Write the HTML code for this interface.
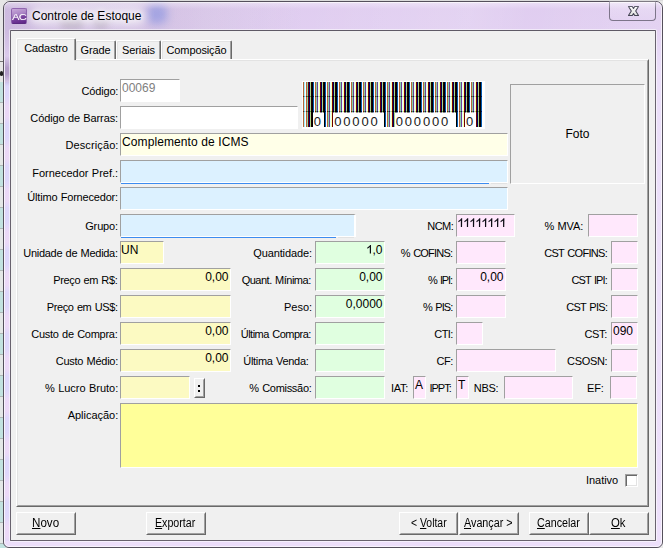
<!DOCTYPE html><html><head><meta charset="utf-8"><title>Controle de Estoque</title><style>
*{margin:0;padding:0;box-sizing:border-box;}
html,body{width:663px;height:548px;overflow:hidden;background:#e9e9e9;}
body{position:relative;font-family:"Liberation Sans",sans-serif;font-size:11px;color:#000;}
.a{position:absolute;}
#win{position:absolute;left:3px;top:1px;width:660px;height:547px;border:1px solid #55505c;border-radius:7px 7px 6px 6px;
 background:linear-gradient(100deg,rgba(255,255,255,0) 0%,rgba(255,255,255,.10) 28%,rgba(255,255,255,0) 40%,rgba(255,255,255,.12) 62%,rgba(255,255,255,0) 70%,rgba(255,255,255,.10) 90%),linear-gradient(180deg,#e0cdf0 0px,#e1cff1 30px,#e9dbf8 70px,#ebdcfa 100%);}
#win:before{content:"";position:absolute;left:0;top:0;right:0;bottom:0;border:1px solid rgba(255,255,255,.65);border-radius:6px 6px 5px 5px;}
#client{position:absolute;left:10px;top:30px;width:646px;height:511px;background:#f0f0f0;border:1px solid #68626e;border-top-color:#5f5a66;border-radius:1px;box-shadow:0 0 0 1px rgba(255,255,255,.55);}
.lbl{position:absolute;white-space:nowrap;font-size:11px;line-height:14px;}
.f{position:absolute;height:23px;border:1px solid #a0a0a0;border-right-color:#fff;border-bottom-color:#fff;font-size:12px;line-height:14px;padding:1px 0 0 1px;white-space:nowrap;overflow:hidden;}
.r{text-align:right;padding-right:1.5px;}
.y0{background:#ffffe8;} .w{background:#fff;} .b{background:#dcf1ff;} .y{background:#fcfac2;} .g{background:#e0ffe0;} .p{background:#ffe8fc;} .yy{background:#ffff99;}
.btn{position:absolute;top:512px;height:23px;letter-spacing:-0.2px;background:#f0f0f0;border:1px solid #fff;border-right-color:#696969;border-bottom-color:#696969;font-size:11px;text-align:center;line-height:18px;}
.btn:before{content:"";position:absolute;left:0;top:0;right:0;bottom:0;border:1px solid #f0f0f0;border-right-color:#a0a0a0;border-bottom-color:#a0a0a0;}
.btn u{text-decoration:underline;}
</style></head><body>
<div class="a" style="left:0;top:0;width:663px;height:1px;background:#dcdcdc"></div>
<div class="a" style="left:0;top:0px;width:6px;height:548px;background:#e6e6e6"></div>
<div class="a" style="left:0;top:82px;width:6px;height:466px;background:repeating-linear-gradient(180deg,#c2e2e0 0px,#c2e2e0 20px,#b0b8b8 20px,#b0b8b8 21px,#e4e7e7 21px,#e4e7e7 41px,#b0b8b8 41px,#b0b8b8 42px)"></div>
<div class="a" style="left:0;top:61px;width:4px;height:1px;background:#777"></div>
<div class="a" style="left:0;top:71px;width:3px;height:5px;background:#222;border-radius:2px"></div>
<div id="win"></div>
<div class="a" style="left:4px;top:2px;width:300px;height:28px;border-radius:6px 0 0 0;background:linear-gradient(90deg,rgba(80,60,110,.13),rgba(80,60,110,.10) 50%,rgba(80,60,110,0))"></div>
<div class="a" style="left:4px;top:30px;width:6px;height:60px;background:linear-gradient(180deg,rgba(80,60,110,.13),rgba(80,60,110,.0))"></div>
<div class="a" style="left:60px;top:17px;width:24px;height:12px;border-radius:6px;background:rgba(120,110,120,.35);filter:blur(3px)"></div>
<div class="a" style="left:93px;top:17px;width:16px;height:12px;border-radius:6px;background:rgba(120,110,120,.30);filter:blur(3px)"></div>
<div class="a" style="left:147px;top:4px;width:20px;height:20px;border-radius:7px;background:rgba(100,125,225,.42);filter:blur(4px)"></div>
<div class="a" style="left:30px;top:6px;width:116px;height:20px;border-radius:10px;background:rgba(255,255,255,.55);filter:blur(5px)"></div>
<div class="a" style="left:11px;top:8px;width:16px;height:16px;border-radius:2px;background:linear-gradient(165deg,#c9a9da 0%,#a983c4 40%,#7a459f 58%,#5e2487 100%);border:1px solid #8d62ad;border-bottom-color:#5a2a80"></div>
<div class="a" style="left:11px;top:11px;width:16px;font-size:10px;line-height:12px;color:#fff;text-align:center;letter-spacing:-0.6px;transform:scale(1.12,.9);text-shadow:0 0 1px rgba(255,255,255,.5)">AC</div>
<div class="a" style="left:32px;top:9px;font-size:12px;line-height:14px;white-space:nowrap;text-shadow:0 0 5px rgba(255,255,255,.9),0 0 8px rgba(255,255,255,.7)">Controle de Estoque</div>
<div class="a" style="left:609px;top:1px;width:47px;height:20px;border:1px solid #7d758a;border-top:none;border-radius:0 0 4px 4px;background:linear-gradient(180deg,rgba(255,255,255,.25),rgba(255,255,255,.05))"></div>
<svg class="a" style="left:626px;top:4px" width="15" height="14" viewBox="0 0 15 14"><defs><linearGradient id="xg" x1="0" y1="0" x2="0" y2="1"><stop offset="0" stop-color="#fff"/><stop offset="1" stop-color="#dcdcdc"/></linearGradient></defs><path d="M2.5 2.5H6.3L7.5 4.5 8.7 2.5H12.5L9.7 7 12.5 11.5H8.7L7.5 9.5 6.3 11.5H2.5L5.3 7Z" fill="url(#xg)" stroke="#464656" stroke-width="1.1" stroke-linejoin="round"/></svg>
<div class="a" style="left:5px;top:82px;width:5px;height:459px;background:repeating-linear-gradient(180deg,rgba(195,205,255,.32) 0px,rgba(195,205,255,.32) 14px,rgba(240,205,240,.22) 24px,rgba(240,205,240,.22) 35px,rgba(195,205,255,.32) 42px)"></div>
<div class="a" style="left:5px;top:56px;width:5px;height:30px;background:linear-gradient(180deg,rgba(120,90,150,0),rgba(120,90,150,.45) 40%,rgba(120,90,150,.45) 60%,rgba(120,90,150,0))"></div>
<div class="a" style="left:5px;top:2px;width:656px;height:7px;border-radius:5px 5px 0 0;background:linear-gradient(180deg,rgba(255,255,255,.38),rgba(255,255,255,0))"></div>
<div id="client"></div>
<div class="a" style="left:16px;top:59px;width:633px;height:448px;border:1px solid #fff;border-right-color:#696969;border-bottom-color:#696969"></div>
<div class="a" style="left:17px;top:60px;width:631px;height:446px;border:1px solid #e3e3e3;border-right-color:#a0a0a0;border-bottom-color:#a0a0a0"></div>
<div class="a" style="left:75px;top:40px;width:41px;height:19px;background:#f0f0f0;border-left:1px solid #fff;border-top:1px solid #fff;border-right:1px solid #696969;border-radius:2px 2px 0 0;box-shadow:inset 1px 1px 0 #e3e3e3"></div>
<div class="a" style="left:114px;top:41px;width:1px;height:18px;background:#a0a0a0"></div>
<div class="a" style="left:75px;top:44px;width:41px;text-align:center;font-size:11px;line-height:13px;letter-spacing:-0.12px">Grade</div>
<div class="a" style="left:116px;top:40px;width:45px;height:19px;background:#f0f0f0;border-left:1px solid #fff;border-top:1px solid #fff;border-right:1px solid #696969;border-radius:2px 2px 0 0;box-shadow:inset 1px 1px 0 #e3e3e3"></div>
<div class="a" style="left:159px;top:41px;width:1px;height:18px;background:#a0a0a0"></div>
<div class="a" style="left:116px;top:44px;width:45px;text-align:center;font-size:11px;line-height:13px;letter-spacing:-0.12px">Seriais</div>
<div class="a" style="left:161px;top:40px;width:71px;height:19px;background:#f0f0f0;border-left:1px solid #fff;border-top:1px solid #fff;border-right:1px solid #696969;border-radius:2px 2px 0 0;box-shadow:inset 1px 1px 0 #e3e3e3"></div>
<div class="a" style="left:230px;top:41px;width:1px;height:18px;background:#a0a0a0"></div>
<div class="a" style="left:161px;top:44px;width:71px;text-align:center;font-size:11px;line-height:13px;letter-spacing:-0.12px">Composição</div>
<div class="a" style="left:16px;top:38px;width:60px;height:22px;background:#f0f0f0;border-left:1px solid #fff;border-top:1px solid #fff;border-right:1px solid #696969;border-radius:2px 2px 0 0;box-shadow:inset 1px 1px 0 #e3e3e3"></div>
<div class="a" style="left:74px;top:39px;width:1px;height:21px;background:#a0a0a0"></div>
<div class="a" style="left:16px;top:42px;width:60px;text-align:center;font-size:11px;line-height:13px;letter-spacing:-0.12px">Cadastro</div>
<div class="a" style="left:18px;top:59px;width:56px;height:2px;background:#f0f0f0"></div>
<div class="lbl" style="left:81.5px;top:84px;letter-spacing:-0.17px;word-spacing:0.47px">Código:</div>
<div class="lbl" style="left:30.3px;top:111px;letter-spacing:-0.1px;word-spacing:0.40px">Código de Barras:</div>
<div class="lbl" style="left:65.4px;top:138px;letter-spacing:0.12px;word-spacing:0.18px">Descrição:</div>
<div class="lbl" style="left:32.3px;top:166px;letter-spacing:-0.01px;word-spacing:0.31px">Fornecedor Pref.:</div>
<div class="lbl" style="left:27.3px;top:190px;letter-spacing:-0.19px;word-spacing:0.49px">Último Fornecedor:</div>
<div class="lbl" style="left:85.2px;top:219px;letter-spacing:-0.14px;word-spacing:0.44px">Grupo:</div>
<div class="lbl" style="left:23.3px;top:246px;letter-spacing:-0.29px;word-spacing:0.59px">Unidade de Medida:</div>
<div class="lbl" style="left:53.3px;top:273px;letter-spacing:-0.38px;word-spacing:0.68px">Preço em R$:</div>
<div class="lbl" style="left:46.7px;top:300px;letter-spacing:-0.38px;word-spacing:0.68px">Preço em US$:</div>
<div class="lbl" style="left:31.3px;top:327px;letter-spacing:-0.26px;word-spacing:0.56px">Custo de Compra:</div>
<div class="lbl" style="left:55.7px;top:354px;letter-spacing:-0.25px;word-spacing:0.55px">Custo Médio:</div>
<div class="lbl" style="left:45.0px;top:381px;letter-spacing:-0.01px;word-spacing:0.31px">% Lucro Bruto:</div>
<div class="lbl" style="left:67.7px;top:408px;letter-spacing:-0.02px;word-spacing:0.32px">Aplicação:</div>
<div class="lbl" style="left:253.3px;top:246px;letter-spacing:-0.13px;word-spacing:0.43px">Quantidade:</div>
<div class="lbl" style="left:241.7px;top:273px;letter-spacing:-0.5px;word-spacing:0.80px">Quant. Mínima:</div>
<div class="lbl" style="left:284.0px;top:300px;letter-spacing:0.0px;word-spacing:0.30px">Peso:</div>
<div class="lbl" style="left:240.7px;top:327px;letter-spacing:-0.5px;word-spacing:0.80px">Última Compra:</div>
<div class="lbl" style="left:243.3px;top:354px;letter-spacing:-0.3px;word-spacing:0.60px">Última Venda:</div>
<div class="lbl" style="left:249.3px;top:381px;letter-spacing:-0.29px;word-spacing:0.59px">% Comissão:</div>
<div class="lbl" style="left:427.3px;top:219px;letter-spacing:-0.57px;word-spacing:0.87px">NCM:</div>
<div class="lbl" style="left:400.8px;top:246px;letter-spacing:-0.79px;word-spacing:1.09px">% COFINS:</div>
<div class="lbl" style="left:427.9px;top:273px;letter-spacing:-1.15px;word-spacing:1.45px">% IPI:</div>
<div class="lbl" style="left:423.0px;top:300px;letter-spacing:-0.92px;word-spacing:1.22px">% PIS:</div>
<div class="lbl" style="left:434.3px;top:327px;letter-spacing:-0.57px;word-spacing:0.87px">CTI:</div>
<div class="lbl" style="left:436.4px;top:354px;letter-spacing:-0.4px;word-spacing:0.70px">CF:</div>
<div class="lbl" style="left:391.0px;top:381px;letter-spacing:-0.27px;word-spacing:0.57px">IAT:</div>
<div class="lbl" style="left:429.4px;top:381px;letter-spacing:-0.97px;word-spacing:1.27px">IPPT:</div>
<div class="lbl" style="left:473.7px;top:381px;letter-spacing:-0.23px;word-spacing:0.53px">NBS:</div>
<div class="lbl" style="left:544.6px;top:219px;letter-spacing:-0.15px;word-spacing:0.45px">% MVA:</div>
<div class="lbl" style="left:544.2px;top:246px;letter-spacing:-0.68px;word-spacing:0.98px">CST COFINS:</div>
<div class="lbl" style="left:571.5px;top:273px;letter-spacing:-0.9px;word-spacing:1.20px">CST IPI:</div>
<div class="lbl" style="left:566.2px;top:300px;letter-spacing:-0.68px;word-spacing:0.98px">CST PIS:</div>
<div class="lbl" style="left:584.4px;top:327px;letter-spacing:-0.33px;word-spacing:0.63px">CST:</div>
<div class="lbl" style="left:567.1px;top:354px;letter-spacing:-0.34px;word-spacing:0.64px">CSOSN:</div>
<div class="lbl" style="left:587.1px;top:381px;letter-spacing:-0.15px;word-spacing:0.45px">EF:</div>
<div class="lbl" style="left:586.0px;top:473px;letter-spacing:-0.05px;word-spacing:0.35px">Inativo</div>
<div class="f w" style="left:120px;top:79px;width:60px;height:23px;color:#808080">00069</div>
<div class="f w" style="left:120px;top:106px;width:178px;height:23px;"></div>
<div class="f y0" style="left:120px;top:133px;width:388px;height:23px;letter-spacing:0.1px">Complemento de ICMS</div>
<div class="f b" style="left:120px;top:160px;width:388px;height:23px;"></div>
<div class="f b" style="left:120px;top:187px;width:388px;height:23px;"></div>
<div class="f b" style="left:120px;top:214px;width:236px;height:23px;border-right-width:2px"></div>
<div class="f y" style="left:120px;top:241px;width:44px;height:23px;padding-left:0">UN</div>
<div class="f y r" style="left:120px;top:268px;width:111px;height:23px;">0,00</div>
<div class="f y r" style="left:120px;top:295px;width:111px;height:23px;"></div>
<div class="f y r" style="left:120px;top:322px;width:111px;height:23px;">0,00</div>
<div class="f y r" style="left:120px;top:349px;width:111px;height:23px;">0,00</div>
<div class="f y" style="left:120px;top:376px;width:70px;height:23px;"></div>
<div class="f yy" style="left:120px;top:403px;width:518px;height:65px;"></div>
<div class="a" style="left:121px;top:183px;width:368px;height:1px;background:#3c8cf0"></div>
<div class="a" style="left:121px;top:237px;width:215px;height:1px;background:#3c8cf0"></div>
<div class="a" style="left:338px;top:237px;width:16px;height:1px;background:#e2e2e2"></div>
<div class="a" style="left:491px;top:183px;width:16px;height:1px;background:#e2e2e2"></div>
<div class="f g r" style="left:315px;top:241px;width:70px;height:23px;"><svg width="6.7" height="8.6" viewBox="0 0 6.7 8.6" style="vertical-align:baseline"><path d="M5.0 8.6h-1.2v-6.5q-1.1 1.1-2.5 1.6v-1.3q2.1-1 2.95-2.4h.75z" fill="#0c0c14"/></svg>,0</div>
<div class="f g r" style="left:315px;top:268px;width:70px;height:23px;">0,00</div>
<div class="f g r" style="left:315px;top:295px;width:70px;height:23px;">0,0000</div>
<div class="f g r" style="left:315px;top:322px;width:70px;height:23px;"></div>
<div class="f g r" style="left:315px;top:349px;width:70px;height:23px;"></div>
<div class="f g r" style="left:315px;top:376px;width:70px;height:23px;"></div>
<div class="f p" style="left:456px;top:214px;width:59px;height:23px;"></div>
<svg class="a" style="left:456px;top:214px" width="59" height="23" viewBox="0 0 59 23"><path d="M6.05 13.1h-1.2v-6.5q-1.1 1.1-2.5 1.6v-1.3q2.1-1 2.95-2.75h.9z" fill="#0c0c14"/><path d="M12.08 13.1h-1.2v-6.5q-1.1 1.1-2.5 1.6v-1.3q2.1-1 2.95-2.75h.9z" fill="#0c0c14"/><path d="M18.11 13.1h-1.2v-6.5q-1.1 1.1-2.5 1.6v-1.3q2.1-1 2.95-2.75h.9z" fill="#0c0c14"/><path d="M24.14 13.1h-1.2v-6.5q-1.1 1.1-2.5 1.6v-1.3q2.1-1 2.95-2.75h.9z" fill="#0c0c14"/><path d="M30.17 13.1h-1.2v-6.5q-1.1 1.1-2.5 1.6v-1.3q2.1-1 2.95-2.75h.9z" fill="#0c0c14"/><path d="M36.20 13.1h-1.2v-6.5q-1.1 1.1-2.5 1.6v-1.3q2.1-1 2.95-2.75h.9z" fill="#0c0c14"/><path d="M42.23 13.1h-1.2v-6.5q-1.1 1.1-2.5 1.6v-1.3q2.1-1 2.95-2.75h.9z" fill="#0c0c14"/><path d="M48.26 13.1h-1.2v-6.5q-1.1 1.1-2.5 1.6v-1.3q2.1-1 2.95-2.75h.9z" fill="#0c0c14"/></svg>
<div class="f p" style="left:456px;top:241px;width:50px;height:23px;"></div>
<div class="f p r" style="left:456px;top:268px;width:50px;height:23px;">0,00</div>
<div class="f p" style="left:456px;top:295px;width:50px;height:23px;"></div>
<div class="f p" style="left:456px;top:322px;width:27px;height:23px;"></div>
<div class="f p" style="left:456px;top:349px;width:100px;height:23px;"></div>
<div class="f p" style="left:413px;top:376px;width:13px;height:23px;">A</div>
<div class="f p" style="left:456px;top:376px;width:13px;height:23px;">T</div>
<div class="f p" style="left:504px;top:376px;width:69px;height:23px;"></div>
<div class="f p" style="left:588px;top:214px;width:50px;height:23px;"></div>
<div class="f p" style="left:611px;top:241px;width:27px;height:23px;"></div>
<div class="f p" style="left:611px;top:268px;width:27px;height:23px;"></div>
<div class="f p" style="left:611px;top:295px;width:27px;height:23px;"></div>
<div class="f p" style="left:611px;top:322px;width:27px;height:23px;">090</div>
<div class="f p" style="left:611px;top:349px;width:27px;height:23px;"></div>
<div class="f p" style="left:610px;top:376px;width:27px;height:23px;"></div>
<div class="btn" style="left:194px;top:378px;width:11px;height:20px"></div>
<div class="a" style="left:198px;top:385px;width:2px;height:2px;background:#000"></div>
<div class="a" style="left:198px;top:390px;width:2px;height:2px;background:#000"></div>
<div class="a" style="left:510px;top:84px;width:135px;height:100px;border:1px solid #a0a0a0;border-right-color:#fff;border-bottom-color:#fff;text-align:center;font-size:12px;line-height:98px">Foto</div>
<div class="a" style="left:625px;top:474px;width:13px;height:13px;background:#fff;border:1px solid #a0a0a0;border-right-color:#fff;border-bottom-color:#fff;box-shadow:inset 1px 1px 0 #696969,inset -1px -1px 0 #e3e3e3"></div>
<svg class="a" style="left:302px;top:81px" width="183" height="48" viewBox="0 0 183 48" shape-rendering="crispEdges"><defs><pattern id="bn" width="12" height="48" patternUnits="userSpaceOnUse"><rect x="1" width="1" height="48" fill="#b86838"/><rect x="2" width="1" height="48" fill="#88d0a8"/><rect x="3" width="1" height="48" fill="#704098"/><rect x="4" width="1" height="48" fill="#e0ffff"/><rect x="5" width="1" height="48" fill="#ffffb0"/><rect x="6" width="1" height="48" fill="#700000"/><rect x="7" width="1" height="48" fill="#000060"/><rect x="8" width="1" height="48" fill="#a8d888"/><rect x="9" width="1" height="48" fill="#200000"/><rect x="10" width="1" height="48" fill="#000000"/><rect x="11" width="1" height="48" fill="#0058b0"/></pattern><pattern id="bd" width="12" height="48" patternUnits="userSpaceOnUse"><rect x="1" width="1" height="48" fill="#70240a"/><rect x="2" width="1" height="48" fill="#3d905e"/><rect x="3" width="1" height="48" fill="#290d4d"/><rect x="4" width="1" height="48" fill="#a7d8d8"/><rect x="5" width="1" height="48" fill="#d8d867"/><rect x="6" width="1" height="48" fill="#290000"/><rect x="7" width="1" height="48" fill="#00001e"/><rect x="8" width="1" height="48" fill="#5e9b3d"/><rect x="9" width="1" height="48" fill="#030000"/><rect x="10" width="1" height="48" fill="#000000"/><rect x="11" width="1" height="48" fill="#001967"/></pattern><pattern id="bl" width="12" height="48" patternUnits="userSpaceOnUse"><rect x="1" width="1" height="48" fill="#dbb39b"/><rect x="2" width="1" height="48" fill="#c3e7d3"/><rect x="3" width="1" height="48" fill="#b79fcb"/><rect x="4" width="1" height="48" fill="#efffff"/><rect x="5" width="1" height="48" fill="#ffffd7"/><rect x="6" width="1" height="48" fill="#b77f7f"/><rect x="7" width="1" height="48" fill="#7f7faf"/><rect x="8" width="1" height="48" fill="#d3ebc3"/><rect x="9" width="1" height="48" fill="#8f7f7f"/><rect x="10" width="1" height="48" fill="#7f7f7f"/><rect x="11" width="1" height="48" fill="#7fabd7"/></pattern></defs><rect width="183" height="48" fill="#fff"/><rect x="0" y="1" width="180" height="45" fill="url(#bn)"/><rect x="2" y="1" width="1" height="45" fill="#a0f0ff"/><rect x="3" y="1" width="1" height="45" fill="#ffffff"/><rect x="4" y="1" width="1" height="45" fill="#b86838"/><rect x="5" y="1" width="1" height="45" fill="#88d0a8"/><rect x="0" y="15" width="180" height="1" fill="url(#bd)"/><rect x="2" y="15" width="1" height="1" fill="#55c0d8"/><rect x="3" y="15" width="1" height="1" fill="#d8d8d8"/><rect x="4" y="15" width="1" height="1" fill="#70240a"/><rect x="5" y="15" width="1" height="1" fill="#3d905e"/><rect x="0" y="30" width="180" height="1" fill="url(#bd)"/><rect x="2" y="30" width="1" height="1" fill="#55c0d8"/><rect x="3" y="30" width="1" height="1" fill="#d8d8d8"/><rect x="4" y="30" width="1" height="1" fill="#70240a"/><rect x="5" y="30" width="1" height="1" fill="#3d905e"/><rect x="11" y="31" width="11" height="17" fill="#fff"/><rect x="11" y="31" width="11" height="1" fill="url(#bl)"/><rect x="31" y="31" width="51" height="17" fill="#fff"/><rect x="31" y="31" width="51" height="1" fill="url(#bl)"/><rect x="93" y="31" width="61" height="17" fill="#fff"/><rect x="93" y="31" width="61" height="1" fill="url(#bl)"/><rect x="163" y="31" width="11" height="17" fill="#fff"/><rect x="163" y="31" width="11" height="1" fill="url(#bl)"/></svg>
<div class="a" style="left:313.7px;top:114px;font-size:13px;line-height:15px;letter-spacing:1.85px;color:#181818;white-space:nowrap">0</div>
<div class="a" style="left:334.2px;top:114px;font-size:13px;line-height:15px;letter-spacing:1.85px;color:#181818;white-space:nowrap">00000</div>
<div class="a" style="left:395.7px;top:114px;font-size:13px;line-height:15px;letter-spacing:1.85px;color:#181818;white-space:nowrap">000000</div>
<div class="a" style="left:466.0px;top:114px;font-size:13px;line-height:15px;letter-spacing:1.85px;color:#181818;white-space:nowrap">0</div>
<div class="btn" style="left:16px;width:60px"></div>
<div class="a" style="left:32.37px;top:516px;font-size:12.5px;line-height:14px;white-space:nowrap;transform-origin:0 0;transform:scaleX(0.929)"><u>N</u>ovo</div>
<div class="btn" style="left:146px;width:60px"></div>
<div class="a" style="left:155.15px;top:516px;font-size:12.5px;line-height:14px;white-space:nowrap;transform-origin:0 0;transform:scaleX(0.852)"><u>E</u>xportar</div>
<div class="btn" style="left:399px;width:59px"></div>
<div class="a" style="left:410.57px;top:516px;font-size:12.5px;line-height:14px;white-space:nowrap;transform-origin:0 0;transform:scaleX(0.833)">&lt; <u>V</u>oltar</div>
<div class="btn" style="left:459px;width:60px"></div>
<div class="a" style="left:464.00px;top:516px;font-size:12.5px;line-height:14px;white-space:nowrap;transform-origin:0 0;transform:scaleX(0.861)"><u>A</u>vançar &gt;</div>
<div class="btn" style="left:529px;width:60px"></div>
<div class="a" style="left:537.24px;top:516px;font-size:12.5px;line-height:14px;white-space:nowrap;transform-origin:0 0;transform:scaleX(0.857)"><u>C</u>ancelar</div>
<div class="btn" style="left:589px;width:60px"></div>
<div class="a" style="left:611.29px;top:516px;font-size:12.5px;line-height:14px;white-space:nowrap;transform-origin:0 0;transform:scaleX(0.907)"><u>O</u>k</div>
</body></html>
